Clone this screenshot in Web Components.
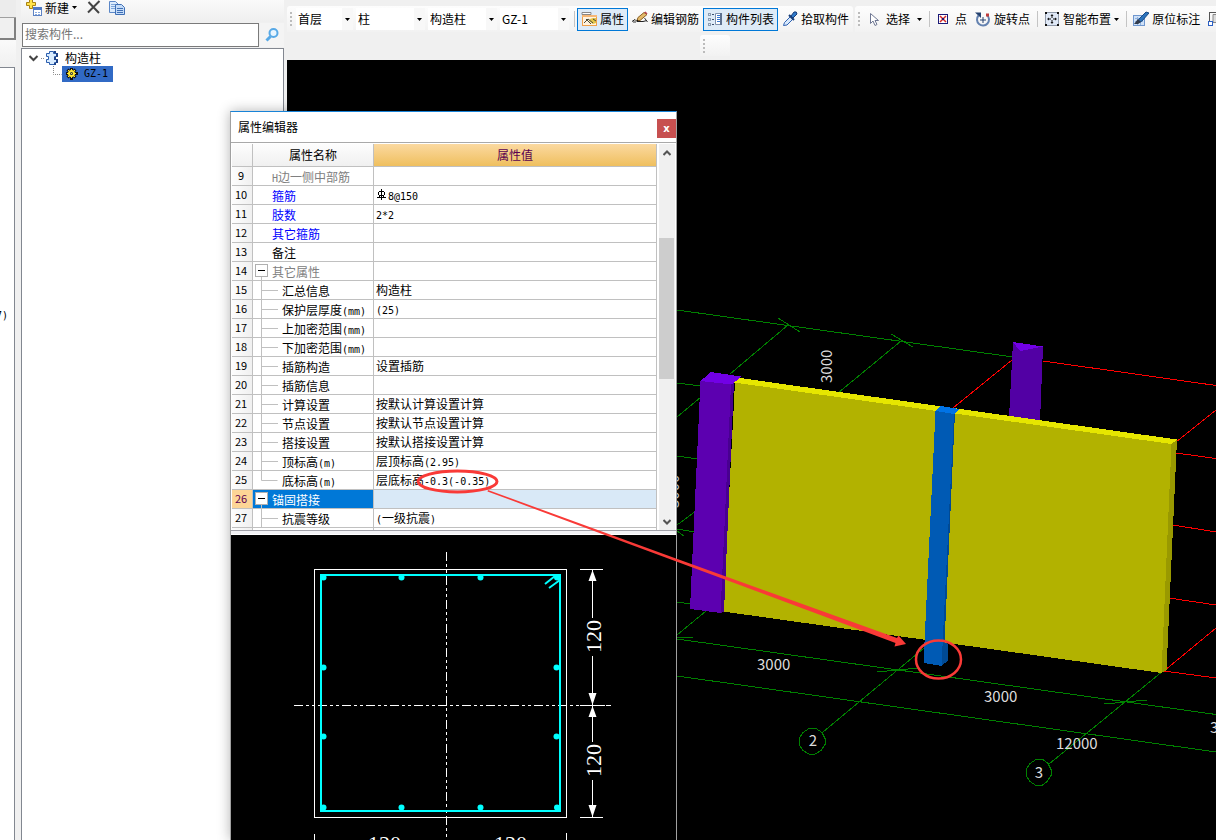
<!DOCTYPE html>
<html lang="zh-CN">
<head>
<meta charset="utf-8">
<title>构件属性</title>
<style>
  html, body {
    height: 100%;
    margin: 0;
  }
  body {
    overflow: hidden;
    background: #f0f0f0;
    color: #000;
    font: 12px/16px "Noto Sans CJK SC", sans-serif;
  }
</style>
</head>
<body>
<cad-app></cad-app>

<script>
const ICONS = {
  create: `
    <path d="M3.5 0.5h3v3h3v3h-3v3h-3v-3h-3v-3h3z" transform="translate(0 -1)" fill="#ffe34a" stroke="#a98213"/>
    <rect x="7.5" y="7.5" width="8" height="8" fill="#fff" stroke="#5d83c4"/>
    <path d="M7 7h9v3H7z" fill="#4f79c6"/>
    <path d="M9 12.5h2M12 12.5h2M9 14.5h2M12 14.5h2" stroke="#8aaade"/>`,
  remove: `<path d="M3.5 2L14 13M14.500 1L3 12.500" stroke="#444" stroke-width="2" fill="none"/>`,
  copy: `
    <g transform="translate(-2 0)">
      <path d="M2.500 1.500h6l3 3v8h-9z" fill="#dcebfc" stroke="#5b87c7"/>
      <path d="M4 4.500h4M4 6.500h4M4 8.500h4" stroke="#7ea6da"/>
      <path d="M8.500 4.500h6l3 3v7h-9z" fill="#c3dbf8" stroke="#3f6fb5"/>
      <path d="M10 8.500h6M10 10.500h6M10 12.500h6" stroke="#3f6fb5"/>
    </g>`,
  find: `
    <circle cx="9.500" cy="6" r="4" fill="#e8f5ff" stroke="#58a9e6" stroke-width="2"/>
    <path d="M6.500 9.500L2.500 13.500" stroke="#58a9e6" stroke-width="3"/>`,
  property: `
    <path d="M1 1.500h9v2H1z" fill="#fff" stroke="#888"/>
    <rect x="1.500" y="4.500" width="14" height="10" fill="#fff3df" stroke="#f0a04a"/>
    <path d="M1 4h15v2H1z" fill="#f5b775"/>
    <path d="M9 8l3-1h3v5l-3 1-4-3z" fill="#e3c548"/>
    <path d="M3 12l4-4 5 4M5 8l5 5M12 8l3 2" stroke="#4c4a38" fill="none"/>`,
  rebar: `
    <path d="M0 10.500l3-2 2 2 6 0 4-1" fill="none" stroke="#222"/>
    <path d="M12.500 7l3 4M1 11h3" stroke="#333"/>
    <path d="M5 9.500l1-3 6-5 3 2-7 6z" fill="#e3b96a" stroke="#8b6124"/>
    <path d="M12 1.500l1.500-1 2 2-1 1z" fill="#b8464f"/>
    <path d="M4.500 10.500l0.500-2 1.500 1.500z" fill="#111"/>`,
  list: `
    <path d="M1.500 2.500h2v2h-2zM1.500 7.500h2v2h-2zM1.500 12.500h2v2h-2z" stroke="#3c4f6c" stroke-dasharray="1 1"/>
    <path d="M5 3.500h2M5 8.500h2M5 13.500h2" stroke="#3c4f6c"/>
    <path d="M8.500 2.500h6v11h-6z" fill="#fff" stroke="#8092ad"/>
    <path d="M14 2v12" stroke="#5d718f" stroke-width="2"/>
    <path d="M10 4.500h3M10 6.500h3M10 8.500h3M10 10.500h3" stroke="#3577d2"/>`,
  picker: `
    <path d="M1.500 14.500l1-3 6-6 2.500 2.500-6 6z" fill="#d7e8fb" stroke="#2f62b3"/>
    <path d="M7 4l5 5" stroke="#173d78" stroke-width="2"/>
    <path d="M9 5l3-4q3-1 3 2l-4 4z" fill="#2f79c9" stroke="#173d78"/>`,
  cursor: `<path d="M4.500 2.500v10l2.500-2.500 2 4.500 2-1-2-4h3.500z" transform="translate(-1 0)" fill="#fff" stroke="#6f7893"/>`,
  point: `
    <rect x="2.500" y="3.500" width="9" height="9" fill="#fff" stroke="#1a1a78"/>
    <path d="M4 5l6 6M10 5l-6 6" stroke="#d22626" stroke-width="1.500"/>
    <path d="M6 7h2v2H6z" fill="#1a1a78"/>`,
  rotate: `
    <path d="M3.500 4.500A6 6 0 1 0 12 4" fill="none" stroke="#6482b0" stroke-width="2"/>
    <path d="M0 1.500h6v5.500z" fill="#24416f"/>
    <path d="M8 6v6M5 9h6" stroke="#24416f"/>
    <path d="M11 2.500h3v3h-3z" fill="#c03b3b"/>`,
  smart: `
    <rect x="1.500" y="1.500" width="13" height="13" fill="#dfe8f6" stroke="#33425c" stroke-dasharray="1 1"/>
    <path d="M6.500 5h3l-1.500-2zM6.500 11h3l-1.500 2zM5 6.500v3l-2-1.500zM11 6.500v3l2-1.500z" fill="#111"/>
    <path d="M8 5v2M8 9v2M5 8h2M9 8h2" stroke="#111"/>
    <path d="M1 1h2v2H1zM13 1h2v2h-2zM1 13h2v2H1zM13 13h2v2h-2z" fill="#111"/>`,
  annotate: `
    <rect x="0.500" y="4.500" width="11" height="10" fill="#cfe1f7" stroke="#6f97cf"/>
    <path d="M2 7.500h8M2 10.500h8M4.500 6v8M7.500 6v8" stroke="#8fb2e0"/>
    <path d="M6 8l7-7 3 1-7 8-4 2z" fill="#2c74bd" stroke="#174a86"/>
    <path d="M1 13l4-5 3 3-3 2z" fill="#333c4c"/>`,
  table: `
    <path d="M1.500 1v9M1 1.500h15" stroke="#555"/>
    <path d="M5 3.500h11v8H5z" fill="#dcdcdc" stroke="#888"/>
    <rect x="0.500" y="10.500" width="4" height="4" fill="#fff" stroke="#2c60c4"/>`,
  column: `
    <path d="M4.500 1.500h4v2h3v3h-2v3h3v3h-3v2h-5v-2h-3v-3h2v-3h-2v-3h3z" fill="#d9ecff" stroke="#2c5fae"/>
    <path d="M9 1h2v2h2v4h-2v2h2v4h-2v2H9v-2h2v-3H9V7h2V3H9z" fill="#1e4389"/>`,
  gear: `
    <path d="M7.500 2v12M2 7.500h12M3.500 3.500l8 8M11.500 3.500l-8 8" stroke="#111" stroke-width="3"/>
    <path d="M7.500 3v9M3 7.500h9M4 4l7 7M11 4l-7 7" stroke="#ffe832"/>
    <circle cx="7.500" cy="7.500" r="2.500" fill="#26344a" stroke="#ffe832" stroke-width="2"/>
    <path d="M7 7h1v1H7z" fill="#ffe832"/>`,
};

// SVG icon, 16 x 16
class UiIcon extends HTMLElement {
  constructor() {
    super();
    this.shadowDOM = this.attachShadow({mode: 'open'});
  }

  connectedCallback() {
    this.shadowDOM.innerHTML = `
      <style>
        :host { display: block; flex: none; width: 16px; height: 16px; }
        svg { display: block; }
      </style>
      <svg width="16" height="16" viewBox="0 0 16 16" fill="none" aria-hidden="true">${ICONS[this.getAttribute('name')] || ''}</svg>
    `;
  }
}
customElements.define('ui-icon', UiIcon);

class ToolButton extends HTMLElement {
  constructor() {
    super();
    this.shadowDOM = this.attachShadow({mode: 'open'});
  }

  connectedCallback() {
    const icon = this.getAttribute('icon');
    const label = this.getAttribute('label') || '';
    this.shadowDOM.innerHTML = `
      <style>
        :host { display: block; flex: none; }
        button {
          display: flex;
          align-items: center;
          gap: 3px;
          height: 23px;
          padding: 0 3px;
          border: 1px solid transparent;
          background: none;
          color: inherit;
          font: inherit;
          white-space: nowrap;
        }
        :host([active]) button { border-color: #0078d7; background: #deebf7; }
        :host([split]) svg { margin-left: 4px; }
      </style>
      <button type="button" ${label ? `aria-label="${label}"` : ''}>
        <ui-icon name="${icon}"></ui-icon>
        <slot></slot>
        ${this.hasAttribute('menu') ? '<svg width="5" height="3" viewBox="0 0 5 3"><path d="M0 0h5L2.500 3z"/></svg>' : ''}
      </button>
    `;
  }
}
customElements.define('tool-button', ToolButton);

class ComboBox extends HTMLElement {
  constructor() {
    super();
    this.shadowDOM = this.attachShadow({mode: 'open'});
  }

  connectedCallback() {
    this.shadowDOM.innerHTML = `
      <style>
        :host { display: grid; width: 69px; height: 22px; align-items: center; background: #fff; }
        :host([small]) { width: 57px; }
        select, span { grid-area: 1 / 1; }
        select {
          appearance: none;
          height: 22px;
          padding: 0 14px 0 2px;
          border: 0;
          background: none;
          color: inherit;
          font: inherit;
        }
        span {
          display: grid;
          place-items: center;
          justify-self: end;
          width: 11px;
          height: 22px;
          background: #f8f8f8;
          pointer-events: none;
        }
      </style>
      <select aria-label="${this.getAttribute('label')}"><option>${this.getAttribute('value')}</option></select>
      <span><svg width="5" height="3" viewBox="0 0 5 3"><path d="M0 0h5L2.500 3z"/></svg></span>
    `;
  }
}
customElements.define('combo-box', ComboBox);

class ToolBar extends HTMLElement {
  constructor() {
    super();
    this.shadowDOM = this.attachShadow({mode: 'open'});
    this.shadowDOM.innerHTML = `
      <style>
        :host {
          display: flex;
          flex: none;
          align-items: center;
          box-sizing: border-box;
          height: 26px;
          padding-left: 3px;
          border-radius: 3px 3px 0 0;
          background: linear-gradient(#fdfdfd, #f2f2f2);
        }
        .grip {
          width: 2px;
          height: 14px;
          margin-right: 3px;
          background: repeating-linear-gradient(#bcbcbc 0 2px, transparent 2px 4px);
        }
        ::slotted(hr) {
          flex: none;
          width: 1px;
          height: 16px;
          margin: 0 2px 0 3px;
          border: 0;
          background: #c4c4c4;
        }
      </style>
      <div class="grip"></div>
      <slot></slot>
    `;
  }
}
customElements.define('tool-bar', ToolBar);

class MainToolbars extends HTMLElement {
  constructor() {
    super();
    this.shadowDOM = this.attachShadow({mode: 'open'});
    this.shadowDOM.innerHTML = `
      <style>
        :host { display: block; box-sizing: border-box; height: 60px; padding-top: 6px; overflow: hidden; }
        .row { display: flex; gap: 2px; }
        .combos { display: flex; gap: 3px; padding: 0 2px 0 1px; }
        .extra { width: 30px; height: 21px; margin: 3px 0 0 413px; }
      </style>
      <div class="row">
        <tool-bar>
          <div class="combos">
            <combo-box small label="楼层" value="首层"></combo-box>
            <combo-box label="类别" value="柱"></combo-box>
            <combo-box label="类型" value="构造柱"></combo-box>
            <combo-box label="构件" value="GZ-1"></combo-box>
          </div>
          <hr>
          <tool-button icon="property" active>属性</tool-button>
          <tool-button icon="rebar">编辑钢筋</tool-button>
          <tool-button icon="list" active>构件列表</tool-button>
          <tool-button icon="picker">拾取构件</tool-button>
        </tool-bar>
        <tool-bar>
          <tool-button icon="cursor" menu split>选择</tool-button>
          <hr>
          <tool-button icon="point">点</tool-button>
          <tool-button icon="rotate">旋转点</tool-button>
          <hr>
          <tool-button icon="smart" menu>智能布置</tool-button>
          <hr>
          <tool-button icon="annotate">原位标注</tool-button>
          <tool-button icon="table" label="表格"></tool-button>
        </tool-bar>
      </div>
      <tool-bar class="extra"></tool-bar>
    `;
  }
}
customElements.define('main-toolbars', MainToolbars);

// Edge of the module navigator, mostly folded away
class NavStrip extends HTMLElement {
  constructor() {
    super();
    this.shadowDOM = this.attachShadow({mode: 'open'});
    this.shadowDOM.innerHTML = `
      <style>
        :host { display: flex; flex-direction: column; width: 16px; overflow: hidden; }
        .tab { box-sizing: border-box; height: 18px; border-bottom: 1px solid #a0a0a0; background: #ececec; }
        .tab.current { height: 22px; border-right: 2px solid #808080; border-bottom: 2px solid #808080; background: #f0f0f0; }
        .head { height: 27px; background: linear-gradient(#fafafa, #f0f0f0); }
        .list {
          display: flex;
          flex: 1;
          justify-content: flex-end;
          margin-right: 1px;
          padding: 240px 6px 0 0;
          border-top: 1px solid #828790;
          border-right: 1px solid #828790;
          background: #fff;
          font: 10px/16px "DejaVu Sans Mono", monospace;
        }
      </style>
      <div class="tab"></div>
      <div class="tab current"></div>
      <div class="head"></div>
      <div class="list">7)</div>
    `;
  }
}
customElements.define('nav-strip', NavStrip);

class ComponentPanel extends HTMLElement {
  constructor() {
    super();
    this.shadowDOM = this.attachShadow({mode: 'open'});
    this.shadowDOM.innerHTML = `
      <style>
        :host { display: flex; flex-direction: column; width: 263px; }
        .tools { display: flex; height: 22px; padding-left: 1px; align-items: flex-start; background: linear-gradient(#fafafa, #efefef); }
        tool-button { margin-top: -4px; }
        .search { display: flex; gap: 1px; margin: 1px 0; }
        input {
          flex: 1;
          box-sizing: border-box;
          min-width: 0;
          height: 24px;
          margin-left: 1px;
          padding: 0 2px 4px;
          border: 1px solid #7a7a7a;
          border-radius: 0;
          background: #fff;
          font: inherit;
        }
        input::placeholder { color: #757575; }
        .search button { display: grid; place-items: center; width: 24px; padding: 0; border: 0; background: #f4f4f4; }
        .tree {
          flex: 1;
          margin: 0;
          padding: 1px 0 0 7px;
          border: 1px solid #828790;
          border-bottom: 0;
          background: #fff;
          list-style: none;
        }
        .tree ul { margin: 0; padding: 0; list-style: none; }
        .node { display: flex; align-items: center; height: 16px; }
        .node svg { flex: none; }
        .node ui-icon { margin-right: 4px; }
        .leaf { display: flex; align-items: center; padding: 0 5px 0 2px; height: 16px; background: #316ac5; font: 10px/16px "DejaVu Sans Mono", monospace; }
      </style>
      <div class="tools">
        <tool-button icon="create" menu>新建</tool-button>
        <tool-button icon="remove" label="删除"></tool-button>
        <tool-button icon="copy" label="复制"></tool-button>
      </div>
      <div class="search">
        <input type="text" placeholder="搜索构件..." aria-label="搜索构件">
        <button type="button" aria-label="搜索"><ui-icon name="find"></ui-icon></button>
      </div>
      <ul class="tree">
        <li>
          <div class="node">
            <svg width="16" height="16" viewBox="0 0 16 16" fill="none">
              <path d="M0.500 6L4.500 10L8.500 6" stroke="#444" stroke-width="2"/>
              <path d="M12 8.500h4" stroke="#888" stroke-dasharray="1 1"/>
            </svg>
            <ui-icon name="column"></ui-icon>构造柱
          </div>
          <ul>
            <li class="node">
              <svg width="33" height="16" viewBox="0 0 33 16" fill="none">
                <path d="M24.500 0v8.500h8" stroke="#888" stroke-dasharray="1 1"/>
              </svg>
              <div class="leaf"><ui-icon name="gear"></ui-icon>GZ-1</div>
            </li>
          </ul>
        </li>
      </ul>
    `;
  }
}
customElements.define('component-panel', ComponentPanel);

// Wall and tie columns on the axis grid
class ModelView extends HTMLElement {
  constructor() {
    super();
    this.shadowDOM = this.attachShadow({mode: 'open'});
    this.shadowDOM.innerHTML = `
      <style>
        :host { display: block; min-height: 0; background: #000; }
        svg { display: block; width: 100%; height: 100%; }
        text { fill: #dcdcdc; font: 15px "Noto Sans CJK SC", sans-serif; }
      </style>
      <svg viewBox="287 60 929 780" preserveAspectRatio="xMinYMin slice" fill="none">
        <g stroke="#008000" shape-rendering="crispEdges">
          <path d="M677 310L1013 357M778 318L800 332M788 325L730 374M891 334L913 347M901 341L838 393"/>
          <path d="M677 383L701 386M677 417L701 397M677 456L698 459M677 525L696 511M677 529L695 532M677 531L684 536"/>
          <path d="M677 602L691 604M706 611L677 635M677 638L693 637"/>
          <path d="M677 639L1216 714.500M677 676L1216 752"/>
          <path d="M877 672L918 668M1104 704L1147 700M930 643L823 732M1163 671L1049 764"/>
          <path d="M809 728.500h7l6 4 3 6v6l-4 6-6 3.500h-6l-6-3.500-4-6v-6l4-6z"/>
          <path d="M1036 759.500h7l5 4 3 6v6l-4 6-5 4h-6l-6-4-4-6v-6l4-6z"/>
        </g>
        <g stroke="#f00" shape-rendering="crispEdges">
          <path d="M1043 361L1216 385.500M1012 360L953 408M1216 410L1176 442M1176 453L1216 458.500"/>
          <path d="M1173 525L1216 532M1169 598L1216 605M1216 628L1164 671M1164 671L1216 678"/>
        </g>
        <g shape-rendering="crispEdges">
          <path d="M1013 342L1043 346.500L1040 422L1009 418z" fill="#5200a4"/>
          <path d="M1013 342L1043 346.500L1020 351z" fill="#7200e6"/>
          <path d="M735 382L1171.500 444L1161.500 673L723 611.500z" fill="#b2b200"/>
          <path d="M740 378L1177 439.500L1171.500 444L734 382.500z" fill="#e6e600"/>
          <path d="M1171.500 444L1177 439.500L1166.500 670L1161.500 673z" fill="#999900"/>
          <path d="M700.500 381L732 384.500L721 613L690 609z" fill="#5c00b0"/>
          <path d="M731 384L734 382L724 612L720.500 613z" fill="#480090"/>
          <path d="M711 372L741 376.500L732 384.500L700.500 381z" fill="#7200e6"/>
          <path d="M953 413L955 412L944.500 643L948.500 644L947.500 661L941.500 666z" fill="#004a94"/>
          <path d="M935.500 411L954 413.500L941.500 666L923.500 663z" fill="#005ab4"/>
          <path d="M941 406L959.500 409L954 414L935.500 411z" fill="#0073e6"/>
        </g>
        <text x="757" y="670">3000</text>
        <text x="984" y="702">3000</text>
        <text x="1056" y="749">12000</text>
        <text x="1210" y="733">3000</text>
        <text x="813" y="746" text-anchor="middle">2</text>
        <text x="1039" y="778" text-anchor="middle">3</text>
        <text transform="translate(832 383) rotate(-90)">3000</text>
        <text transform="translate(679 508) rotate(-90)">3000</text>
      </svg>
    `;
  }
}
customElements.define('model-view', ModelView);

const REBAR = '<svg width="12" height="12" viewBox="0 0 12 12" fill="none" stroke="#000" shape-rendering="crispEdges"><path d="M5.500 0v11M1 8.500h9M3 2.500h5M3 6.500h5M2.500 3v3M8.500 3v3M3.500 7v2M7.500 7v2"/></svg>';

const PROPERTIES = [
  {no: 9, name: 'H边一侧中部筋', kind: 'muted'},
  {no: 10, name: '箍筋', kind: 'key', value: '8@150', rebar: true},
  {no: 11, name: '肢数', kind: 'key', value: '2*2'},
  {no: 12, name: '其它箍筋', kind: 'key'},
  {no: 13, name: '备注'},
  {no: 14, name: '其它属性', kind: 'muted', tree: 'open'},
  {no: 15, name: '汇总信息', tree: 'mid', value: '构造柱'},
  {no: 16, name: '保护层厚度(mm)', tree: 'mid', value: '(25)'},
  {no: 17, name: '上加密范围(mm)', tree: 'mid'},
  {no: 18, name: '下加密范围(mm)', tree: 'mid'},
  {no: 19, name: '插筋构造', tree: 'mid', value: '设置插筋'},
  {no: 20, name: '插筋信息', tree: 'mid'},
  {no: 21, name: '计算设置', tree: 'mid', value: '按默认计算设置计算'},
  {no: 22, name: '节点设置', tree: 'mid', value: '按默认节点设置计算'},
  {no: 23, name: '搭接设置', tree: 'mid', value: '按默认搭接设置计算'},
  {no: 24, name: '顶标高(m)', tree: 'mid', value: '层顶标高(2.95)'},
  {no: 25, name: '底标高(m)', tree: 'last', value: '层底标高-0.3(-0.35)'},
  {no: 26, name: '锚固搭接', kind: 'selected', tree: 'open'},
  {no: 27, name: '抗震等级', tree: 'mid', value: '(一级抗震)'},
];

const BRANCHES = {
  open: '<path d="M8.500 15v4" stroke="#c0c0c0"/><rect x="2.500" y="2.500" width="12" height="12" fill="#fff" stroke="#b0b0b0"/><path d="M5 8.500h7" stroke="#000"/>',
  mid: '<path d="M8.500 0v19M9 9.500h16" stroke="#c0c0c0"/>',
  last: '<path d="M8.500 0v9.500h16" stroke="#c0c0c0"/>',
};

class PropertyGrid extends HTMLElement {
  constructor() {
    super();
    this.shadowDOM = this.attachShadow({mode: 'open'});
  }

  connectedCallback() {
    this.render();
  }

  // latin runs are set in the half-width face
  mixed(text = '') {
    return text.replace(/[\x21-\x7e]+/g, '<span class="half">$&</span>');
  }

  row(item) {
    const branch = item.tree || 'none';
    const width = branch === 'mid' || branch === 'last' ? 29 : 19;
    return `
      <tr class="${item.kind || ''}">
        <th scope="row">${item.no}</th>
        <td class="name"><div><svg width="${width}" height="18" viewBox="0 0 ${width} 18" fill="none">${BRANCHES[branch] || ''}</svg><span class="text">${this.mixed(item.name)}</span></div></td>
        <td class="value"><div>${item.rebar ? REBAR : ''}<span class="text">${this.mixed(item.value)}</span></div></td>
      </tr>`;
  }

  render() {
    this.shadowDOM.innerHTML = `
      <style>
        :host { display: flex; gap: 2px; padding: 1px 1px 0 1px; border-top: 1px solid #a9a9a9; border-bottom: 1px solid #a0a0a8; background: #fff; }
        table { flex: 1; table-layout: fixed; border-spacing: 0; width: 0; }
        th, td {
          box-sizing: border-box;
          height: 19px;
          padding: 0;
          border-right: 1px solid #c0c0c0;
          border-bottom: 1px solid #c0c0c0;
          font-weight: normal;
          white-space: nowrap;
        }
        col.no { width: 21px; }
        col.name { width: 121px; }
        thead th { height: 23px; background: linear-gradient(#fdfdfd, #f0f0f0); }
        thead th.value { background: linear-gradient(#fbd9a0, #efbf5e); color: #5a0050; }
        tbody th { padding: 0 2px 2px 0; background: linear-gradient(90deg, #fdfdfd, #f0f0f0); font-size: 11px; text-align: center; }
        td div { display: flex; align-items: center; height: 18px; }
        td.value div { padding-left: 2px; }
        svg { flex: none; }
        .text { height: 16px; }
        .name .text { padding-top: 2px; }
        .half { font: 10px/1 "DejaVu Sans Mono", monospace; }
        .muted .name { color: #808080; }
        .key .name { color: #00f; }
        .selected th { background: #fdd596; color: #5a0050; }
        .selected .name { background: #0078d7; color: #fff; }
        .selected .value { background: #d9e9f7; }
        .rest th, .rest td { height: 2px; padding: 0; border-bottom: 0; }
        .scroll { display: flex; flex-direction: column; width: 16px; background: #f0f0f0; }
        .scroll button { display: grid; place-items: center; height: 17px; padding: 0; border: 0; background: none; }
        .track { flex: 1; }
        .thumb { height: 40%; margin-right: 1px; background: #cdcdcd; }
        .before { height: 22%; }
      </style>
      <table>
        <colgroup><col class="no"><col class="name"><col></colgroup>
        <thead><tr><th></th><th scope="col">属性名称</th><th scope="col" class="value">属性值</th></tr></thead>
        <tbody>
          ${PROPERTIES.map((item) => this.row(item)).join('')}
          <tr class="rest"><th></th><td></td><td></td></tr>
        </tbody>
      </table>
      <div class="scroll">
        <button type="button" aria-label="向上"><svg width="8" height="6" viewBox="0 0 8 6" fill="none"><path d="M0.500 5L4 1.500L7.500 5" stroke="#555" stroke-width="2"/></svg></button>
        <div class="track"><div class="before"></div><div class="thumb"></div></div>
        <button type="button" aria-label="向下"><svg width="8" height="6" viewBox="0 0 8 6" fill="none"><path d="M0.500 1L4 4.500L7.500 1" stroke="#555" stroke-width="2"/></svg></button>
      </div>
    `;
  }
}
customElements.define('property-grid', PropertyGrid);

// Column cross-section with stirrup, bars and dimensions
class SectionView extends HTMLElement {
  constructor() {
    super();
    this.shadowDOM = this.attachShadow({mode: 'open'});
  }

  connectedCallback() {
    const bars = [];
    [323.5, 401.5, 480.5, 557].forEach((x) => bars.push([x, 577.5], [x, 807.5]));
    [667.5, 736.5].forEach((y) => bars.push([323.5, y], [556.5, y]));
    this.shadowDOM.innerHTML = `
      <style>
        :host { display: block; min-height: 0; overflow: hidden; background: #000; }
        svg { display: block; width: 100%; height: 100%; }
        text { fill: #fff; font: 22px "Liberation Serif", serif; }
      </style>
      <svg viewBox="231 535 445 305" preserveAspectRatio="xMinYMin slice" fill="none">
        <g stroke="#fff">
          <rect x="314.500" y="569.500" width="252" height="248"/>
          <path d="M446.500 552V838M294 705.500H611" stroke-dasharray="9 3 3 3 3 3"/>
          <path d="M580 569.500h23M580 705.500h25M580 817.500h23M592.500 570v48M592.500 656v86M592.500 780v37M314.500 834v8M566.500 833v8"/>
        </g>
        <path d="M592.500 570l4 11h-8zM592.500 705l4-12h-8zM592.500 706l4 11h-8zM592.500 817l4-12h-8z" fill="#fff"/>
        <rect x="321" y="575" width="239" height="236" stroke="#0ff" stroke-width="2"/>
        <path d="M545 584L555 576M549 588L560 580" stroke="#0ff" stroke-width="2"/>
        <g fill="#0ff">${bars.map(([x, y]) => `<circle cx="${x}" cy="${y}" r="3"/>`).join('')}</g>
        <text transform="translate(601 653) rotate(-90)">120</text>
        <text transform="translate(601 777) rotate(-90)">120</text>
        <text x="368" y="851">120</text>
        <text x="494" y="851">120</text>
      </svg>
    `;
  }
}
customElements.define('section-view', SectionView);

class PropertyEditor extends HTMLElement {
  constructor() {
    super();
    this.shadowDOM = this.attachShadow({mode: 'open'});
    this.shadowDOM.innerHTML = `
      <style>
        :host {
          display: flex;
          flex-direction: column;
          box-sizing: border-box;
          border: solid #a0a0a0;
          border-width: 1px 1px 0;
          border-top-color: #1883d7;
          background: #f2f2f5;
          box-shadow: 0 0 12px rgba(0, 0, 0, 0.3);
        }
        header { display: flex; align-items: center; justify-content: space-between; height: 30px; padding-left: 7px; background: #fff; }
        h2 { margin: 0; font: inherit; }
        button {
          width: 19px;
          height: 19px;
          margin-top: 3px;
          padding: 0;
          border: 0;
          background: #c75050;
          color: #fff;
          font: bold 10px/16px "DejaVu Sans", sans-serif;
        }
        section-view { flex: 1; margin-top: 3px; border-top: 1px solid #fff; }
      </style>
      <header>
        <h2><slot name="title"></slot></h2>
        <button type="button" aria-label="关闭">x</button>
      </header>
      <property-grid></property-grid>
      <section-view></section-view>
    `;
  }
}
customElements.define('property-editor', PropertyEditor);

// Red callout from the elevation value to the foot of the column
class CalloutLayer extends HTMLElement {
  constructor() {
    super();
    this.shadowDOM = this.attachShadow({mode: 'open'});
    this.shadowDOM.innerHTML = `
      <style>
        :host { display: block; pointer-events: none; }
        svg { display: block; width: 100%; height: 100%; }
      </style>
      <svg viewBox="0 0 1216 840" preserveAspectRatio="xMinYMin slice" fill="none" stroke="#f93a37">
        <ellipse cx="457.500" cy="481.500" rx="39.500" ry="10.500" stroke-width="3"/>
        <ellipse cx="938.500" cy="659.500" rx="22.500" ry="19" stroke-width="2.500"/>
        <path d="M488 490L676 558.500L897 638L898.500 635.500L906 644L894.500 646.500L895.500 643L675 561L487.500 491.500z" fill="#f93a37" stroke="none"/>
      </svg>
    `;
  }
}
customElements.define('callout-layer', CalloutLayer);

class CadApp extends HTMLElement {
  constructor() {
    super();
    this.shadowDOM = this.attachShadow({mode: 'open'});
    this.shadowDOM.innerHTML = `
      <style>
        :host { position: relative; display: flex; height: 100vh; overflow: hidden; }
        nav-strip, component-panel { flex: none; }
        component-panel { margin: 0 3px 0 5px; }
        main { display: flex; flex: 1; flex-direction: column; min-width: 0; }
        model-view { flex: 1; }
        /* the editor floats over the model */
        property-editor { position: absolute; top: 111px; bottom: 0; left: 230px; width: 447px; }
        callout-layer { position: absolute; inset: 0; }
      </style>
      <nav-strip></nav-strip>
      <component-panel></component-panel>
      <main>
        <main-toolbars></main-toolbars>
        <model-view></model-view>
      </main>
      <property-editor><span slot="title">属性编辑器</span></property-editor>
      <callout-layer></callout-layer>
    `;
  }
}
customElements.define('cad-app', CadApp);
</script>
</body>
</html>
